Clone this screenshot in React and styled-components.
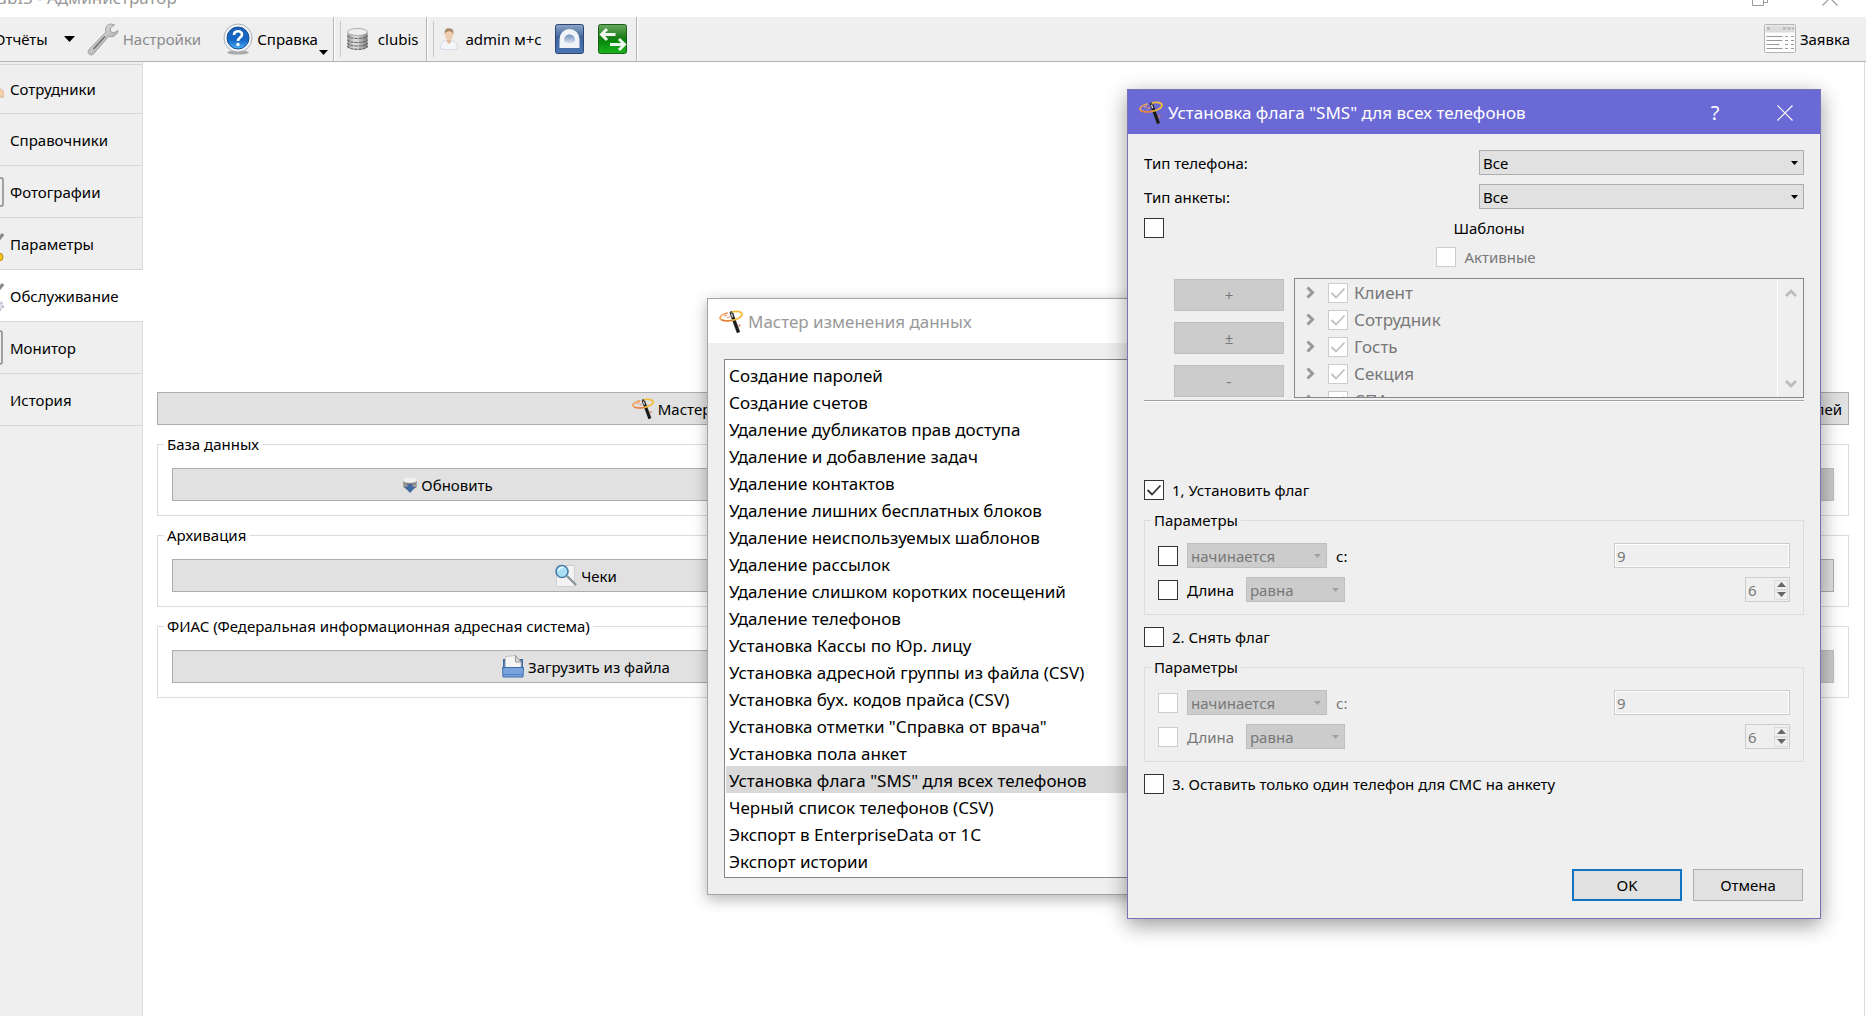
import React from "react";
import styled, { createGlobalStyle, css } from "styled-components";

const uiFont = `"Noto Sans", "Open Sans", sans-serif`;

const GlobalStyle = createGlobalStyle`
  * {
    box-sizing: border-box;
  }
  body {
    margin: 0;
    background: #fff;
    color: #000;
    font-family: ${uiFont};
    font-size: 15px;
    line-height: 20px;
  }
  button, input, select {
    font: inherit;
    color: inherit;
    margin: 0;
  }
`;

/* ---------- icons ---------- */

const WandIcon = ({ size = 24 }) => (
  <svg width={size} height={size} viewBox="0 0 24 24" fill="none">
    <path d="M12.500 3.500 19.500 22.500" stroke="#777" strokeWidth="4" opacity=".45" />
    <path d="M12 2 19.500 22.500" stroke="#1c1a1a" strokeWidth="3.200" />
    <path d="M11 1.500l2.500-.8.900 2.800-2.500.9z" fill="#555" />
    <path d="M12.500 4l1.200 3.300" stroke="#ddd" strokeWidth="1.300" />
    <path d="M13 1.800C18 .800 23 1.800 23 4.300c0 2.800-5.500 5.700-11.500 6.300" stroke="#f2bd3a" strokeWidth="1.800" />
    <path d="M9 3C4.500 4 1 5.800 1 8c0 2.400 5 3.300 11 2.500" stroke="#f0a350" strokeWidth="1.700" />
    <path d="M5 6.500l3-1.500M8 8l3-1.500M6 3.500l2-.5" stroke="#e89a80" strokeWidth="1.200" />
    <path d="M2.500 10c3 1.300 7 1.200 11 .300" stroke="#e2703a" strokeWidth="1" />
    <path d="M19 14.500l3 .5-1.500 2z" fill="#e57a50" />
  </svg>
);

const WrenchIcon = () => (
  <svg width="32" height="33" viewBox="0 0 32 33">
    <defs>
      <linearGradient id="steel" x1="0" y1="0" x2="1" y2="1">
        <stop offset="0" stopColor="#f8f8f8" />
        <stop offset=".5" stopColor="#c4c4c4" />
        <stop offset="1" stopColor="#8a8a8a" />
      </linearGradient>
    </defs>
    <path
      d="M24.500 1C20 1 17.500 4.500 19 9L1.500 27c-1.500 2.500 1 6 4.500 4.500L21.500 13.500c4 1.200 8.500-1 9.500-6l-4 2.500-3.500-1.500v-4l4-2.500z"
      fill="url(#steel)"
      stroke="#a0a0a0"
      strokeWidth="1"
    />
    <path d="M6.500 26 18 13.500" stroke="#6f6f6f" strokeWidth="1.600" />
    <circle cx="4.300" cy="28.700" r="1.200" fill="#f5f5f5" stroke="#888" strokeWidth=".6" />
  </svg>
);

const HelpIcon = () => (
  <svg width="30" height="32" viewBox="0 0 30 32">
    <defs>
      <linearGradient id="blueBall" x1="0" y1="0" x2="0" y2="1">
        <stop offset="0" stopColor="#1c5fb4" />
        <stop offset=".6" stopColor="#1468c8" />
        <stop offset="1" stopColor="#4fb4f4" />
      </linearGradient>
    </defs>
    <ellipse cx="15" cy="29.500" rx="11" ry="2" fill="#aaa" />
    <circle cx="15" cy="15" r="14" fill="#f4f6f8" stroke="#a9b0b8" strokeWidth="1" />
    <circle cx="15" cy="15" r="11" fill="url(#blueBall)" stroke="#1a4f94" strokeWidth="1" />
    <path d="M11 12c0-5 8-5 8-.5 0 3-4 3-4 6.500" fill="none" stroke="#fff" strokeWidth="2.600" />
    <circle cx="15" cy="21.500" r="1.700" fill="#fff" />
  </svg>
);

const DatabaseIcon = () => (
  <svg width="21" height="22" viewBox="0 0 21 22">
    <defs>
      <linearGradient id="drum" x1="0" y1="0" x2="1" y2="0">
        <stop offset="0" stopColor="#9a9a9a" />
        <stop offset=".4" stopColor="#e4e4e4" />
        <stop offset="1" stopColor="#7c7c7c" />
      </linearGradient>
    </defs>
    <path d="M.500 4v14c0 5 20 5 20 0V4z" fill="url(#drum)" />
    <path
      d="M.500 7.500c0 4 20 4 20 0M.500 11.500c0 4 20 4 20 0M.500 15c0 4 20 4 20 0M.500 18c0 4.500 20 4.500 20 0"
      fill="none"
      stroke="#666"
      strokeWidth="1.200"
      strokeDasharray="3 1"
    />
    <ellipse cx="10.500" cy="4" rx="10" ry="3.500" fill="#eee" stroke="#aaa" strokeWidth="1" />
  </svg>
);

const PersonIcon = () => (
  <svg width="18" height="22" viewBox="0 0 18 22">
    <path d="M.500 21c0-6 2-8.500 8.500-8.500s8.500 2.500 8.500 8.500c-4 1-13 1-17 0z" fill="#f3f5f9" stroke="#d5d9e2" strokeWidth="1" />
    <path d="M7 11h4v3l-2 2-2-2z" fill="#e0b898" />
    <ellipse cx="9" cy="6.500" rx="4" ry="5.500" fill="#f0cdb0" />
    <path d="M4.800 6.500C4 1 7 0 9.500.300 13 .500 14 3 13.200 6.500 12 3.500 10 3 8 3.500 6 4 5.200 4.500 4.800 6.500z" fill="#a98a6c" />
  </svg>
);

const LockIcon = () => (
  <svg width="29" height="30" viewBox="0 0 29 30">
    <defs>
      <linearGradient id="navy" x1="0" y1="0" x2="0" y2="1">
        <stop offset="0" stopColor="#8ea6c6" />
        <stop offset=".45" stopColor="#3f649b" />
        <stop offset="1" stopColor="#4a75b2" />
      </linearGradient>
      <linearGradient id="keyhole" x1="0" y1="0" x2="0" y2="1">
        <stop offset="0" stopColor="#6f8db8" />
        <stop offset="1" stopColor="#dfe7f2" />
      </linearGradient>
    </defs>
    <rect x=".500" y=".500" width="28" height="29" rx="2" fill="url(#navy)" stroke="#2b4672" />
    <path d="M4.500 24v-9a10 10 0 0 1 20 0v9z" fill="#f0f3f8" />
    <path d="M9 16.500c0-8 11-8 11 0-2 4-9 4-11 0z" fill="url(#keyhole)" />
  </svg>
);

const SwapIcon = () => (
  <svg width="29" height="30" viewBox="0 0 29 30">
    <defs>
      <linearGradient id="green" x1="0" y1="0" x2="0" y2="1">
        <stop offset="0" stopColor="#6aa860" />
        <stop offset=".45" stopColor="#1c7d18" />
        <stop offset=".55" stopColor="#08860a" />
        <stop offset="1" stopColor="#18b41c" />
      </linearGradient>
    </defs>
    <rect x=".500" y=".500" width="28" height="29" rx="2" fill="url(#green)" stroke="#1b5c1a" />
    <path
      d="M17.500 10.500H4M9 5l-5.500 5.500L9 16M12 20.500h14M21 15l5.500 5.500L21 26"
      fill="none"
      stroke="#edf7ed"
      strokeWidth="3"
    />
  </svg>
);

const FormIcon = () => (
  <svg width="32" height="30" viewBox="0 0 32 30">
    <rect x=".500" y=".500" width="31" height="28" rx="1" fill="#fdfdfd" stroke="#b4b4b4" />
    <rect x="1.500" y="1.500" width="29" height="7" fill="#dcdcdc" />
    <path d="M3 4.500h3M19 4.500h3M23.500 4.500h3M28 4.500h2" stroke="#b0b0b0" strokeWidth="2" />
    <path
      d="M2.500 12.500h16M21 12.500h3M27 12.500h3M2.500 16.500h16M21 16.500h3M27 16.500h3M2.500 20.500h13M21 20.500h3M27 20.500h3M2.500 24.500h16M21 24.500h3M27 24.500h3"
      stroke="#999"
      strokeWidth="1"
    />
  </svg>
);

const RefreshIcon = () => (
  <svg width="14" height="18" viewBox="0 0 14 18">
    <path d="M0 4.500C0 .500 14 .500 14 4.500V11l-4 3H4l-4-3z" fill="#a8a8a8" />
    <ellipse cx="7" cy="4" rx="7" ry="2.800" fill="#f0f0f0" />
    <path d="M1 8h12M1 11h12" stroke="#6d6d6d" />
    <path d="M4.500 8h5v3h3L7 17l-5.500-6h3z" fill="#41699f" />
  </svg>
);

const SearchDocIcon = () => (
  <svg width="22" height="24" viewBox="0 0 22 24">
    <path d="M1.500 1.500h18v21h-18z" fill="#f3f3f3" stroke="#cfcfcf" />
    <path d="M12 12l9 9" stroke="#8d9499" strokeWidth="2.400" />
    <circle cx="7" cy="7.500" r="6" fill="#a9def3" stroke="#4b7da8" strokeWidth="1.600" />
    <path d="M3.500 7a4 4 0 0 1 5-3.500" fill="none" stroke="#e8faff" strokeWidth="1.600" />
  </svg>
);

const FolderIcon = () => (
  <svg width="22" height="23" viewBox="0 0 22 23">
    <path d="M1 4h3v10H1zM16 4h5v10h-5z" fill="#3c68a5" />
    <path d="M3.500 1.500l10-1 5.500 6V14H3z" fill="#f5f5f5" stroke="#c2c2c2" />
    <path d="M13.500.500v6.500H19z" fill="#ddd" stroke="#888" strokeWidth=".8" />
    <path d="M.500 12.500h21l-.5 9.500H1z" fill="#79a3dc" stroke="#3f6cab" />
    <path d="M1 19.500h20" stroke="#4f7fc4" />
  </svg>
);

const SideIcon = ({ children }) => (
  <svg width="24" height="36" viewBox="0 0 24 36" fill="none">
    {children}
  </svg>
);

const Arrow = ({ width = 7, height = 4, color = "#000", up }) => (
  <svg width={width} height={height} viewBox="0 0 8 4" preserveAspectRatio="none">
    <path d={up ? "M0 4h8L4 0z" : "M0 0h8L4 4z"} fill={color} />
  </svg>
);

const Chevron = ({ d, width, height, color = "#999", stroke = 2 }) => (
  <svg width={width} height={height} viewBox={`0 0 ${width} ${height}`}>
    <path d={d} fill="none" stroke={color} strokeWidth={stroke} />
  </svg>
);

const CloseGlyph = ({ color }) => (
  <svg width="16" height="16" viewBox="0 0 16 16">
    <path d="M.500.500l15 15M15.500.500l-15 15" stroke={color} strokeWidth="1.200" />
  </svg>
);

const RestoreGlyph = () => (
  <svg width="16" height="16" viewBox="0 0 16 16">
    <path d="M.500 3.500h11v12H.500zM3.500 3.500v-3h12v12h-4" fill="none" stroke="#999" />
  </svg>
);

/* ---------- small controls ---------- */

const CheckBox = ({ id, checked = false, disabled, label }) => (
  <CheckWrap>
    <CheckInput
      id={id}
      type="checkbox"
      defaultChecked={checked}
      disabled={disabled}
      aria-label={label}
    />
    {checked && (
      <svg width="20" height="20" viewBox="0 0 20 20">
        <path
          d="M3.500 10l4.500 4.500 8.500-9"
          fill="none"
          stroke={disabled ? "#bfbfbf" : "#333"}
          strokeWidth="1.800"
        />
      </svg>
    )}
  </CheckWrap>
);

const Combo = ({ id, value, width, disabled, label }) => (
  <ComboWrap $width={width}>
    <ComboSelect id={id} disabled={disabled} aria-label={label}>
      <option>{value}</option>
    </ComboSelect>
    <Arrow color={disabled ? "#a0a0a0" : "#000"} />
  </ComboWrap>
);

const Spin = ({ id, value }) => (
  <SpinWrap>
    <SpinInput id={id} defaultValue={value} disabled aria-label="Длина" />
    <SpinButtons>
      <SpinButton disabled aria-label="+">
        <Arrow width={9} height={5} color="#666" up />
      </SpinButton>
      <SpinButton disabled aria-label="-">
        <Arrow width={9} height={5} color="#666" />
      </SpinButton>
    </SpinButtons>
  </SpinWrap>
);

const ParamsGroup = ({ name, disabled }) => (
  <DialogGroup>
    <legend>Параметры</legend>
    <ParamRow $disabled={disabled}>
      <CheckBox id={`${name}-prefix`} disabled={disabled} label="начинается с" />
      <Combo id={`${name}-mode`} value="начинается" width={140} disabled label="Условие" />
      <label htmlFor={`${name}-value`}>с:</label>
      <TextInput id={`${name}-value`} defaultValue="9" disabled />
    </ParamRow>
    <ParamRow $disabled={disabled}>
      <CheckBox id={`${name}-length`} disabled={disabled} />
      <LengthLabel htmlFor={`${name}-length`}>Длина</LengthLabel>
      <Combo id={`${name}-compare`} value="равна" width={99} disabled label="Сравнение" />
      <Spin id={`${name}-count`} value="6" />
    </ParamRow>
  </DialogGroup>
);

/* ---------- data ---------- */

const sideItems = [
  {
    text: "Сотрудники",
    icon: <path d="M14 26V18c4-2 9 0 10 4v4z" fill="#f3cfae" stroke="#d8b08e" />,
  },
  {
    text: "Справочники",
    icon: <path d="M10 18c6 0 10 3 10 8H10z" fill="#d9c8d4" />,
  },
  {
    text: "Фотографии",
    icon: <rect x="2" y="4" width="21" height="28" rx="1" fill="#eee" stroke="#888" strokeWidth="1.500" />,
  },
  {
    text: "Параметры",
    icon: (
      <>
        <path d="M23 8l-8 10" stroke="#888" strokeWidth="3" />
        <circle cx="19" cy="31" r="4" fill="#f6c21c" stroke="#b98a0c" />
      </>
    ),
  },
  {
    text: "Обслуживание",
    active: true,
    icon: (
      <>
        <path d="M23 6l-8 10" stroke="#888" strokeWidth="3" />
        <circle cx="19" cy="28" r="4" fill="#dfe1ee" stroke="#b5b7cc" strokeWidth="2" strokeDasharray="2 2" />
      </>
    ),
  },
  {
    text: "Монитор",
    icon: <rect x="1" y="1" width="21" height="33" rx="2" fill="#eee" stroke="#888" strokeWidth="1.500" />,
  },
  { text: "История", icon: null },
];

const wizardItems = [
  "Создание паролей",
  "Создание счетов",
  "Удаление дубликатов прав доступа",
  "Удаление и добавление задач",
  "Удаление контактов",
  "Удаление лишних бесплатных блоков",
  "Удаление неиспользуемых шаблонов",
  "Удаление рассылок",
  "Удаление слишком коротких посещений",
  "Удаление телефонов",
  "Установка Кассы по Юр. лицу",
  "Установка адресной группы из файла (CSV)",
  "Установка бух. кодов прайса (CSV)",
  'Установка отметки "Справка от врача"',
  "Установка пола анкет",
  'Установка флага "SMS" для всех телефонов',
  "Черный список телефонов (CSV)",
  "Экспорт в EnterpriseData от 1С",
  "Экспорт истории",
];

const treeItems = ["Клиент", "Сотрудник", "Гость", "Секция", "СПА"];

/* ---------- page ---------- */

const App = () => {
  return (
    <Desktop>
      <GlobalStyle />
      <MainWindow>
        <MainTitle>
          <span>clubIS - Администратор</span>
          <MainControls>
            <RestoreGlyph />
            <CloseGlyph color="#999" />
          </MainControls>
        </MainTitle>
        <Toolbar>
          <ToolSection>
            <ToolButton $gap={16}>
              Отчёты <Arrow width={11} height={6} />
            </ToolButton>
            <ToolButton disabled>
              <WrenchIcon />
              Настройки
            </ToolButton>
            <HelpButton>
              <HelpIcon />
              Справка
              <Arrow width={9} height={5} />
            </HelpButton>
          </ToolSection>
          <ToolSection $handle>
            <ToolButton $gap={10}>
              <DatabaseIcon />
              clubis
            </ToolButton>
          </ToolSection>
          <ToolSection $handle>
            <ToolButton $gap={7}>
              <PersonIcon />
              admin м+с
            </ToolButton>
            <IconButton aria-label="Блокировка">
              <LockIcon />
            </IconButton>
            <IconButton aria-label="Смена пользователя">
              <SwapIcon />
            </IconButton>
          </ToolSection>
          <RequestButton>
            <FormIcon />
            Заявка
          </RequestButton>
        </Toolbar>
        <Workspace>
          <Sidebar>
            {sideItems.map((item) => (
              <SideTab key={item.text} $active={item.active}>
                <SideIcon>{item.icon}</SideIcon>
                {item.text}
              </SideTab>
            ))}
          </Sidebar>
          <Content>
            <ButtonRow $columns="16fr 7fr">
              <PushButton>
                <WandIcon size={22} />
                Мастер изменения данных
              </PushButton>
              <PushButton $align="flex-end">Создание паролей</PushButton>
            </ButtonRow>
            <Group>
              <legend>База данных</legend>
              <ButtonRow $columns="1fr 2fr">
                <PushButton>
                  <RefreshIcon />
                  Обновить
                </PushButton>
                <PushButton disabled aria-label="Восстановить" />
              </ButtonRow>
            </Group>
            <Group>
              <legend>Архивация</legend>
              <ButtonRow $columns="1fr 1fr">
                <PushButton>
                  <SearchDocIcon />
                  Чеки
                </PushButton>
                <PushButton aria-label="Архив" />
              </ButtonRow>
            </Group>
            <Group>
              <legend>ФИАС (Федеральная информационная адресная система)</legend>
              <ButtonRow $columns="1fr 1fr">
                <PushButton>
                  <FolderIcon />
                  Загрузить из файла
                </PushButton>
                <PushButton disabled aria-label="Очистить" />
              </ButtonRow>
            </Group>
          </Content>
        </Workspace>
      </MainWindow>

      <WizardWindow>
        <WindowTitle>
          <WandIcon />
          Мастер изменения данных
        </WindowTitle>
        <WizardBody>
          <WizardList>
            {wizardItems.map((text, i) => (
              <WizardItem key={text} $selected={i === 15}>
                {text}
              </WizardItem>
            ))}
          </WizardList>
        </WizardBody>
      </WizardWindow>

      <FlagDialog>
        <WindowTitle $active>
          <WandIcon />
          Установка флага "SMS" для всех телефонов
          <TitleControls>
            <TitleButton>?</TitleButton>
            <TitleButton aria-label="Закрыть">
              <CloseGlyph color="#fff" />
            </TitleButton>
          </TitleControls>
        </WindowTitle>
        <DialogBody>
          <Field>
            <label htmlFor="phone-type">Тип телефона:</label>
            <Combo id="phone-type" value="Все" />
          </Field>
          <Field>
            <label htmlFor="form-type">Тип анкеты:</label>
            <Combo id="form-type" value="Все" />
          </Field>
          <TemplatesPanel>
            <CheckBox id="templates" />
            <TemplatesTitle htmlFor="templates">Шаблоны</TemplatesTitle>
            <ActiveRow>
              <CheckBox id="active-only" disabled />
              <label htmlFor="active-only">Активные</label>
            </ActiveRow>
            <TreeButtons>
              <DialogButton disabled>+</DialogButton>
              <DialogButton disabled>±</DialogButton>
              <DialogButton disabled>-</DialogButton>
            </TreeButtons>
            <Tree>
              <TreeRows>
                {treeItems.map((text) => (
                  <TreeRow key={text}>
                    <Chevron d="M1.500 1.500l5 5-5 5" width={9} height={13} stroke={3} />
                    <CheckBox id={`tree-${text}`} checked disabled />
                    <label htmlFor={`tree-${text}`}>{text}</label>
                  </TreeRow>
                ))}
              </TreeRows>
              <TreeScroll>
                <Chevron d="M1 8l5-5 5 5" width={12} height={10} color="#bdbdbd" stroke={3} />
                <Chevron d="M1 2l5 5 5-5" width={12} height={10} color="#bdbdbd" stroke={3} />
              </TreeScroll>
            </Tree>
          </TemplatesPanel>
          <Divider />
          <CheckRow>
            <CheckBox id="set-flag" checked />
            <label htmlFor="set-flag">1, Установить флаг</label>
          </CheckRow>
          <ParamsGroup name="set" />
          <CheckRow>
            <CheckBox id="unset-flag" />
            <label htmlFor="unset-flag">2. Снять флаг</label>
          </CheckRow>
          <ParamsGroup name="unset" disabled />
          <CheckRow>
            <CheckBox id="only-one" />
            <label htmlFor="only-one">3. Оставить только один телефон для СМС на анкету</label>
          </CheckRow>
          <DialogFooter>
            <DialogButton $primary>OK</DialogButton>
            <DialogButton>Отмена</DialogButton>
          </DialogFooter>
        </DialogBody>
      </FlagDialog>
    </Desktop>
  );
};

export default App;

/* ---------- main window ---------- */

const Desktop = styled.div`
  position: relative;
  height: 100vh;
  overflow: hidden;
`;

/* the maximised window runs past the top left corner of the desktop */
const MainWindow = styled.div`
  display: flex;
  flex-direction: column;
  min-height: calc(100vh + 28px);
  margin-top: -28px;
  margin-left: -24px;
`;

const MainTitle = styled.header`
  display: flex;
  align-items: center;
  justify-content: space-between;
  height: 45px;
  padding: 7px 28px 0 8px;
  font-size: 17px;
  color: #999;
`;

const MainControls = styled.div`
  display: flex;
  gap: 54px;
`;

const Toolbar = styled.nav`
  display: flex;
  height: 45px;
  background: #efefef;
  border-bottom: 1px solid #b4b4b4;
`;

const ToolSection = styled.div`
  display: flex;
  align-items: center;
  gap: 12px;
  padding: 0 8px 0 18px;
  border-right: 1px solid #b4b4b4;
  box-shadow: 1px 0 #fff;

  ${({ $handle }) =>
    $handle &&
    css`
      padding-left: 6px;

      &::before {
        content: "";
        height: 36px;
        margin-right: -6px;
        border-left: 1px solid #c8c8c8;
      }
    `}
`;

const ToolButton = styled.button`
  display: flex;
  align-items: center;
  gap: ${({ $gap }) => $gap || 4}px;
  padding: 0;
  border: 0;
  background: none;
  white-space: nowrap;

  &:disabled {
    color: #8a8a8a;
  }
`;

const IconButton = styled(ToolButton)`
  padding: 0 1px;
`;

const HelpButton = styled(ToolButton)`
  margin: 0 -3px 0 10px;

  svg:last-child {
    align-self: flex-end;
    margin-left: -3px;
  }
`;

const RequestButton = styled(ToolButton)`
  margin-left: auto;
  margin-right: 16px;
`;

const Workspace = styled.div`
  display: flex;
  flex: 1;
`;

const Sidebar = styled.aside`
  display: flex;
  flex-direction: column;
  width: 167px;
  padding-top: 2px;
  background: #efefef;
  border-right: 1px solid #dcdcdc;
`;

const SideTab = styled.button`
  display: flex;
  align-items: center;
  gap: 6px;
  height: 52px;
  padding: 1px 0 0 4px;
  margin-right: ${({ $active }) => ($active ? -1 : 0)}px;
  border: 0;
  border-bottom: 1px solid #d6d6d6;
  background: ${({ $active }) => ($active ? "#fff" : "#efefef")};

  &:first-child {
    height: 50px;
    padding-top: 0;
    border-top: 1px solid #d6d6d6;
  }
`;

const Content = styled.main`
  flex: 1;
  padding: 330px 15px 0 14px;
  border-right: 1px solid #dcdcdc;
  margin-right: 1px;
`;

const ButtonRow = styled.div`
  display: grid;
  grid-template-columns: ${({ $columns }) => $columns};
  gap: 6px;
`;

const PushButton = styled.button`
  display: flex;
  align-items: center;
  justify-content: ${({ $align }) => $align || "center"};
  gap: 4px;
  height: 33px;
  padding: 0 6px;
  border: 1px solid #adadad;
  background: #e1e1e1;

  &:disabled {
    border-color: #bfbfbf;
    background: #ccc;
  }
`;

const Group = styled.fieldset`
  min-width: 0;
  margin: 9px 0 0;
  padding: 14px 14px 14px;
  border: 1px solid #dcdcdc;

  legend {
    margin-left: -8px;
    padding: 0 3px;
  }
`;

/* ---------- windows ---------- */

const FloatingWindow = styled.section`
  position: absolute;
  display: flex;
  flex-direction: column;
  background: #efefef;
`;

const WizardWindow = styled(FloatingWindow)`
  top: 298px;
  left: 707px;
  width: 640px;
  border: 1px solid #a5a5a5;
  box-shadow: 0 4px 14px rgba(0, 0, 0, 0.3);
`;

const FlagDialog = styled(FloatingWindow)`
  top: 89px;
  left: 1127px;
  width: 694px;
  border: 1px solid #7674b4;
  box-shadow: 0 6px 20px rgba(0, 0, 0, 0.4);
`;

const WindowTitle = styled.header`
  display: flex;
  align-items: center;
  gap: 5px;
  height: 44px;
  padding: 1px 0 0 11px;
  font-size: 17px;
  color: ${({ $active }) => ($active ? "#fff" : "#999")};
  background: ${({ $active }) => ($active ? "#6b69d6" : "#fff")};
`;

const TitleControls = styled.div`
  display: flex;
  margin-left: auto;
`;

const TitleButton = styled.button`
  display: grid;
  place-items: center;
  width: 70px;
  height: 43px;
  padding: 0;
  border: 0;
  background: none;
  font-size: 20px;
`;

const WizardBody = styled.div`
  padding: 16px;
`;

const WizardList = styled.ul`
  margin: 0;
  padding: 1px 1px 3px;
  list-style: none;
  font-size: 17px;
  border: 1px solid #828790;
  background: #fff;
`;

const WizardItem = styled.li`
  padding: 2px 0 0 3px;
  line-height: 25px;
  background: ${({ $selected }) => ($selected ? "#d9d9d9" : "none")};
`;

/* ---------- dialog ---------- */

const DialogBody = styled.div`
  padding: 16px 16px 17px;
`;

const Field = styled.div`
  display: grid;
  grid-template-columns: 335px 1fr;
  align-items: center;
  margin-bottom: 9px;
`;

const ComboWrap = styled.span`
  display: grid;
  align-items: center;
  width: ${({ $width }) => ($width ? `${$width}px` : "auto")};

  > * {
    grid-area: 1 / 1;
  }

  svg {
    justify-self: end;
    margin-right: 6px;
    pointer-events: none;
  }
`;

const ComboSelect = styled.select`
  appearance: none;
  width: 100%;
  height: 25px;
  padding: 0 3px;
  border: 1px solid #adadad;
  border-radius: 0;
  background: #e1e1e1;

  &:disabled {
    border-color: #bfbfbf;
    background: #ccc;
    color: #787878;
    opacity: 1;
  }
`;

const CheckWrap = styled.span`
  display: inline-grid;
  flex: none;
  width: 20px;
  height: 20px;

  > * {
    grid-area: 1 / 1;
    pointer-events: none;
  }
`;

const CheckInput = styled.input`
  appearance: none;
  width: 20px;
  height: 20px;
  border: 1px solid #333;
  background: #fff;
  pointer-events: auto;

  &:disabled {
    border-color: #ccc;
  }
`;

const TemplatesPanel = styled.div`
  display: grid;
  grid-template-columns: 20px 110px 1fr;
  column-gap: 10px;
  align-items: start;
`;

const TemplatesTitle = styled.label`
  grid-column: 2 / 4;
  text-align: center;
`;

const ActiveRow = styled.div`
  grid-column: 2 / 4;
  display: flex;
  align-items: center;
  justify-content: center;
  gap: 8px;
  margin: 9px 0 11px;
  padding-right: 6px;
  color: #787878;
`;

const TreeButtons = styled.div`
  grid-column: 2;
  display: flex;
  flex-direction: column;
  gap: 11px;
  padding-top: 1px;
`;

const DialogButton = styled.button`
  width: 110px;
  height: 32px;
  padding: 0;
  border: ${({ $primary }) => ($primary ? "2px solid #0f74c4" : "1px solid #adadad")};
  background: #e1e1e1;

  &:disabled {
    border-color: #bfbfbf;
    background: #ccc;
    color: #787878;
  }
`;

const Tree = styled.div`
  display: flex;
  height: 120px;
  border: 1px solid #828790;
  overflow: hidden;
`;

const TreeRows = styled.div`
  flex: 1;
`;

const TreeRow = styled.div`
  display: flex;
  align-items: center;
  height: 27px;
  padding-left: 11px;
  font-size: 17px;
  color: #787878;

  svg:first-child {
    margin-right: 13px;
  }

  label {
    margin-left: 6px;
  }
`;

const TreeScroll = styled.div`
  display: flex;
  flex-direction: column;
  align-items: center;
  justify-content: space-between;
  width: 26px;
  padding: 9px 0 8px;
  border-left: 1px solid #fff;
`;

const Divider = styled.hr`
  height: 2px;
  margin: 2px 0 78px;
  border: 0;
  border-top: 1px solid #a0a0a0;
  border-bottom: 1px solid #fff;
`;

const CheckRow = styled.div`
  display: flex;
  align-items: center;
  gap: 8px;
`;

const DialogGroup = styled.fieldset`
  display: grid;
  gap: 9px;
  min-width: 0;
  margin: 10px 0 12px;
  padding: 13px 13px 12px;
  border: 1px solid #dcdcdc;

  legend {
    margin-left: -7px;
    padding: 0 3px;
  }
`;

const ParamRow = styled.div`
  display: flex;
  align-items: center;
  gap: 9px;
  height: 25px;
  color: ${({ $disabled }) => ($disabled ? "#787878" : "#000")};
`;

const LengthLabel = styled.label`
  width: 50px;
`;

const TextInput = styled.input`
  width: 176px;
  height: 25px;
  margin-left: auto;
  padding: 0 2px;
  border: 1px solid #ccc;
  box-shadow: inset 0 0 0 1px #fff;
  background: #efefef;

  &:disabled {
    color: #787878;
  }
`;

const SpinWrap = styled.span`
  display: flex;
  align-items: center;
  width: 45px;
  height: 25px;
  margin-left: auto;
  padding-right: 1px;
  border: 1px solid #ccc;
`;

const SpinInput = styled.input`
  flex: 1;
  min-width: 0;
  padding: 0 2px;
  border: 0;
  background: none;

  &:disabled {
    color: #787878;
  }
`;

const SpinButtons = styled.span`
  display: grid;
  width: 14px;
`;

const SpinButton = styled.button`
  display: grid;
  place-items: center;
  height: 10px;
  padding: 0;
  border: 1px solid #dcdcdc;
  background: none;
`;

const DialogFooter = styled.footer`
  display: flex;
  justify-content: flex-end;
  gap: 11px;
  margin-top: 75px;
  padding-right: 1px;
`;
